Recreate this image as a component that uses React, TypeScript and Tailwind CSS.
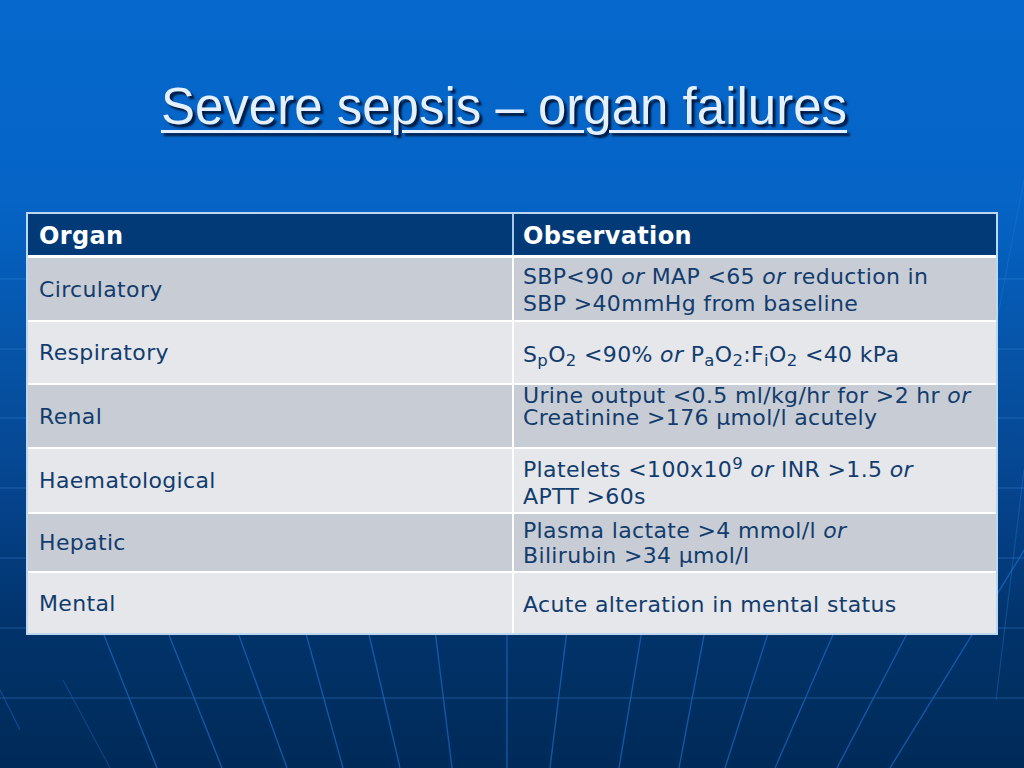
import type { ReactNode } from "react";

type Row = {
  organ: string;
  obs: ReactNode;
  shade: "dark" | "light";
  // per-row vertical placement of the observation text
  obsClass: string;
};

const rows: Row[] = [
  {
    organ: "Circulatory",
    shade: "dark",
    obsClass: "items-start pt-[5px] leading-[27px] h-[62px]",
    obs: (
      <>
        SBP&lt;90 <i>or</i> MAP &lt;65 <i>or</i> reduction in
        <br />
        SBP &gt;40mmHg from baseline
      </>
    ),
  },
  {
    organ: "Respiratory",
    shade: "light",
    obsClass: "items-center pt-[3px] leading-[27px] h-[61px]",
    obs: (
      <>
        S<sub>p</sub>O<sub>2</sub> &lt;90% <i>or</i> P<sub>a</sub>O<sub>2</sub>:F<sub>i</sub>O<sub>2</sub> &lt;40 kPa
      </>
    ),
  },
  {
    organ: "Renal",
    shade: "dark",
    obsClass: "items-start pt-0 leading-[22px] h-[62px]",
    obs: (
      <>
        Urine output &lt;0.5 ml/kg/hr for &gt;2 hr <i>or</i>
        <br />
        Creatinine &gt;176 µmol/l acutely
      </>
    ),
  },
  {
    organ: "Haematological",
    shade: "light",
    obsClass: "items-start pt-[7px] leading-[27px] h-[63px]",
    obs: (
      <>
        Platelets &lt;100x10<sup>9</sup> <i>or</i> INR &gt;1.5 <i>or</i>
        <br />
        APTT &gt;60s
      </>
    ),
  },
  {
    organ: "Hepatic",
    shade: "dark",
    obsClass: "items-start pt-[4px] leading-[25px] h-[57px]",
    obs: (
      <>
        Plasma lactate &gt;4 mmol/l <i>or</i>
        <br />
        Bilirubin &gt;34 µmol/l
      </>
    ),
  },
  {
    organ: "Mental",
    shade: "light",
    obsClass: "items-center pt-[3px] leading-[27px] h-[60px]",
    obs: <>Acute alteration in mental status</>,
  },
];

// fan lines below the table: x at y=630 and x at y=768
const fan: [number, number][] = [
  [102, 157],
  [167, 222],
  [237, 287],
  [305, 343],
  [368, 400],
  [435, 452],
  [507, 507],
  [567, 550],
  [642, 619],
  [705, 679],
  [769, 725],
  [835, 775],
  [909, 837],
  [975, 890],
];

function Backdrop() {
  return (
    <svg
      className="absolute inset-0 h-full w-full"
      viewBox="0 0 1024 768"
      preserveAspectRatio="none"
    >
      {[279, 349, 418, 488, 558, 628, 698].map((y) => (
        <line key={y} x1="0" y1={y} x2="1024" y2={y} stroke="#3f8be0" strokeOpacity="0.28" strokeWidth="1.5" />
      ))}
      {fan.map(([a, b], i) => {
        const k = (b - a) / 138;
        const y0 = 540;
        return (
          <line
            key={i}
            x1={a + k * (y0 - 630)}
            y1={y0}
            x2={b}
            y2={768}
            stroke="#1a6ac4"
            strokeOpacity="0.7"
            strokeWidth="1.4"
          />
        );
      })}
      <line x1="1024" y1="180" x2="995" y2="330" stroke="#2a78d0" strokeOpacity="0.35" strokeWidth="1.2" />
      <line x1="1024" y1="470" x2="996" y2="700" stroke="#2a78d0" strokeOpacity="0.35" strokeWidth="1.2" />
      <line x1="0" y1="690" x2="20" y2="730" stroke="#1a6ac4" strokeOpacity="0.5" strokeWidth="1.2" />
      <line x1="63" y1="680" x2="110" y2="768" stroke="#1a6ac4" strokeOpacity="0.4" strokeWidth="1.2" />
    </svg>
  );
}

export default function App() {
  return (
    <div className="relative h-[768px] w-[1024px] overflow-hidden bg-[linear-gradient(180deg,#0668cc_0%,#0564c6_26%,#0652a4_48%,#05428a_66%,#01336a_82%,#002a58_100%)]">
      <Backdrop />

      <div className="relative">
        <div className="flex justify-center pr-[16px] pt-[81px]">
          <h1 className="font-['Liberation_Sans',Arial,sans-serif] text-[51px] leading-none text-[#e4f0fd] underline decoration-[3px] underline-offset-[6px] [text-shadow:3px_3px_2px_#001a40]">
            Severe sepsis – organ failures
          </h1>
        </div>

        <div className="ml-[26px] mt-[80px] w-[972px] border-2 border-[#bcd7f0] bg-white font-['DejaVu_Sans',Verdana,sans-serif] text-[22px] tracking-[0.35px] text-[#123c6d]">
          <div className="mb-[3px] grid h-[41px] grid-cols-[484px_1fr] gap-x-[2px] bg-[#a9c6e6] font-bold text-[24px] text-white">
            <div className="flex items-center bg-[#023a78] pl-[11px] pt-[2px]">Organ</div>
            <div className="flex items-center bg-[#023a78] pl-[9px] pt-[2px]">Observation</div>
          </div>

          <div className="flex flex-col gap-y-[2px]">
            {rows.map((r) => (
              <div key={r.organ} className="grid grid-cols-[484px_1fr] gap-x-[2px]">
                <div
                  className={
                    r.shade === "dark"
                      ? "flex items-center bg-[#c8cdd5] pl-[11px]"
                      : "flex items-center bg-[#e5e7eb] pl-[11px]"
                  }
                >
                  {r.organ}
                </div>
                <div
                  className={
                    (r.shade === "dark" ? "bg-[#c8cdd5] " : "bg-[#e5e7eb] ") +
                    "flex whitespace-nowrap pl-[9px] " +
                    r.obsClass
                  }
                >
                  <div>{r.obs}</div>
                </div>
              </div>
            ))}
          </div>
        </div>
      </div>
    </div>
  );
}
